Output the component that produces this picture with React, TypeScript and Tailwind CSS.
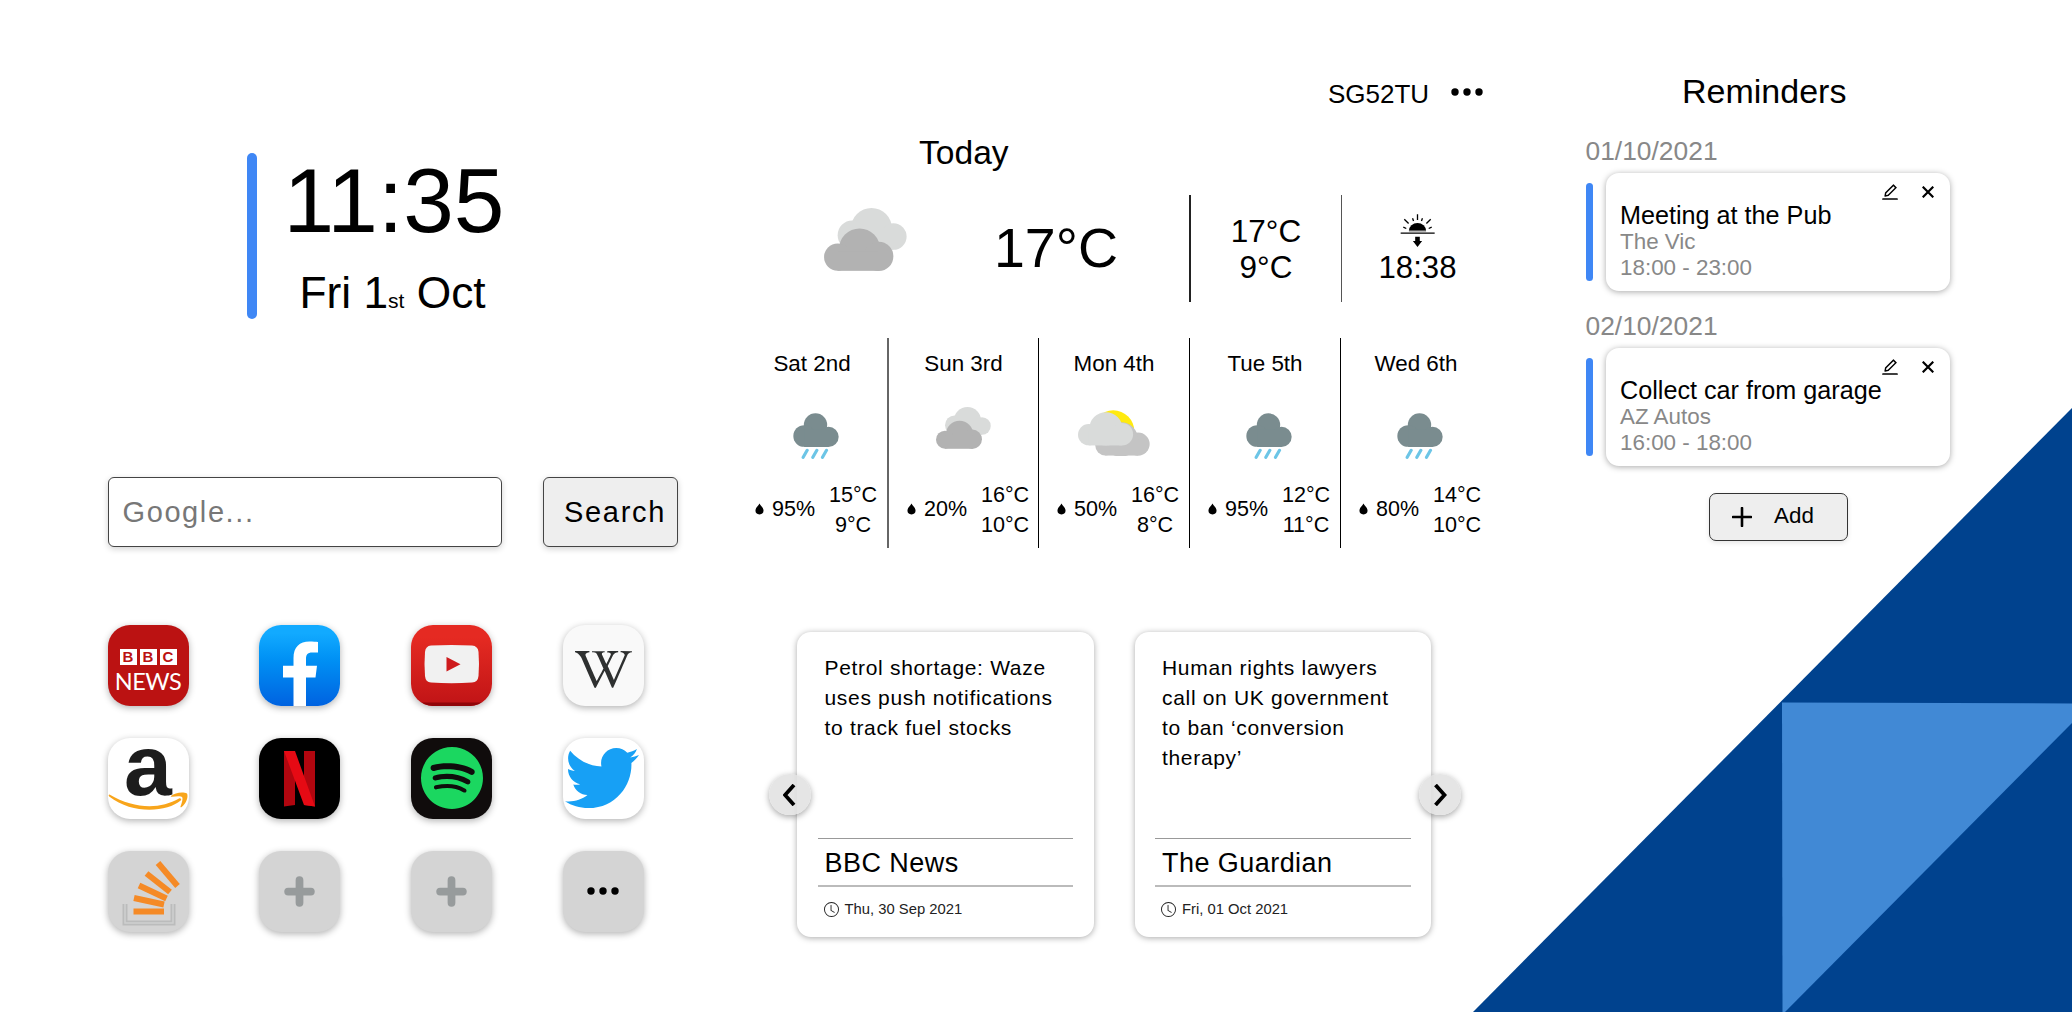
import type { ReactNode } from "react";
import { AiOutlineEdit } from "react-icons/ai";
import { BsClock } from "react-icons/bs";
import { FaSpotify, FaTwitter, FaWikipediaW } from "react-icons/fa";

type Weather = "rain" | "cloudy" | "partly";

const forecast: { day: string; icon: Weather; rain: string; high: string; low: string }[] = [
  { day: "Sat 2nd", icon: "rain", rain: "95%", high: "15°C", low: "9°C" },
  { day: "Sun 3rd", icon: "cloudy", rain: "20%", high: "16°C", low: "10°C" },
  { day: "Mon 4th", icon: "partly", rain: "50%", high: "16°C", low: "8°C" },
  { day: "Tue 5th", icon: "rain", rain: "95%", high: "12°C", low: "11°C" },
  { day: "Wed 6th", icon: "rain", rain: "80%", high: "14°C", low: "10°C" },
];

const news = [
  { title: "Petrol shortage: Waze uses push notifications to track fuel stocks", source: "BBC News", date: "Thu, 30 Sep 2021" },
  { title: "Human rights lawyers call on UK government to ban ‘conversion therapy’", source: "The Guardian", date: "Fri, 01 Oct 2021" },
];

const reminders = [
  { date: "01/10/2021", title: "Meeting at the Pub", place: "The Vic", time: "18:00 - 23:00" },
  { date: "02/10/2021", title: "Collect car from garage", place: "AZ Autos", time: "16:00 - 18:00" },
];

function CloudyIcon({ className }: { className: string }) {
  return (
    <svg viewBox="252 444 250 190" className={className}>
      <g fill="#d9dbda">
        <circle cx="395" cy="506" r="62" />
        <circle cx="337" cy="526" r="44" />
        <circle cx="461" cy="530" r="40" />
        <rect x="337" y="505" width="124" height="65" />
      </g>
      <g fill="#b2b2b2">
        <circle cx="359" cy="568" r="62" />
        <circle cx="293" cy="592" r="41" />
        <circle cx="417" cy="590" r="44" />
        <rect x="293" y="575" width="124" height="58.500" />
      </g>
    </svg>
  );
}

function RainIcon({ className }: { className: string }) {
  return (
    <svg viewBox="161 250 137 138" className={className}>
      <g fill="#7a8c8f">
        <circle cx="228" cy="286" r="35" />
        <circle cx="194" cy="319" r="32.500" />
        <circle cx="267" cy="321.500" r="30.500" />
        <rect x="194" y="300" width="73" height="52" />
      </g>
      <g stroke="#6cc5e6" strokeWidth="9.500" strokeLinecap="round">
        <path d="M203 362L191 383M232 362L220 383M261 362L249 383" />
      </g>
    </svg>
  );
}

function PartlyIcon({ className }: { className: string }) {
  return (
    <svg viewBox="-96 242 217 137" className={className}>
      <circle cx="10" cy="306" r="64" fill="#ffea0f" />
      <g fill="#c4c4c4">
        <circle cx="85" cy="344" r="35" />
        <circle cx="-14" cy="348" r="30" />
        <circle cx="33" cy="330" r="52" />
        <rect x="-14" y="340" width="99" height="38.500" />
      </g>
      <g fill="#d9dbda">
        <circle cx="-64" cy="315.500" r="32" />
        <circle cx="-12" cy="298" r="50" />
        <circle cx="36" cy="314" r="34" />
        <rect x="-64" y="305" width="100" height="43" />
      </g>
    </svg>
  );
}

function WeatherIcon({ kind }: { kind: Weather }) {
  if (kind === "rain") return <RainIcon className="mt-[5px] ml-[7px] h-[46px] w-[46px]" />;
  if (kind === "cloudy") return <CloudyIcon className="-mt-[1px] h-[42px] w-[55px]" />;
  return <PartlyIcon className="mt-0.5 h-[46px] w-[72px]" />;
}

function SunsetIcon() {
  return (
    <svg viewBox="778 459 104 100" className="h-[33px] w-[35px]">
      <path d="M804 510a26 24 0 0 1 52 0z" fill="#000" />
      <path d="M804 511h52" stroke="#999" strokeWidth="3" />
      <path d="M779 517h103" stroke="#000" strokeWidth="4" />
      <g stroke="#000" strokeWidth="4">
        <path d="M830 460v17M815 472l3 8M845 472l-3 8M790 475l13 13M870 475l-13 13M787 499l9 4M873 499l-9 4" />
      </g>
      <path d="M823 528h14v13h7l-14 18l-14-18h7z" fill="#000" />
    </svg>
  );
}

function Dots({ className }: { className: string }) {
  return (
    <svg viewBox="0 0 32 8" className={className}>
      <circle cx="4" cy="4" r="3.700" />
      <circle cx="16" cy="4" r="3.700" />
      <circle cx="28" cy="4" r="3.700" />
    </svg>
  );
}

function Tile({ className, children }: { className: string; children: ReactNode }) {
  return (
    <div className={`relative flex h-[81px] w-[81px] items-center justify-center rounded-[22px] shadow-[0_2px_7px_rgba(0,0,0,0.3)] ${className}`}>
      {children}
    </div>
  );
}

function PlusTile() {
  return (
    <Tile className="bg-[#d4d4d4]">
      <svg viewBox="0 0 30 30" className="h-[31px] w-[31px]" stroke="#979b9c" strokeWidth="7.500" strokeLinecap="round">
        <path d="M15 4v22M4 15h22" />
      </svg>
    </Tile>
  );
}

function Shortcuts() {
  return (
    <div className="mt-[78px] grid grid-cols-[repeat(4,81px)] gap-x-[70.800px] gap-y-8">
      <Tile className="bg-[#bb1212]">
        <div className="mt-[9px] flex flex-col items-center text-white">
          <div className="mt-[3px] flex gap-[3px]">
            {["B", "B", "C"].map((l, i) => (
              <span key={i} className="h-4 w-[17px] bg-white text-center text-[15px] leading-4 font-bold text-[#bb1212]">
                {l}
              </span>
            ))}
          </div>
          <span className="mt-[3px] font-[Lato] text-[23.500px] leading-[26px] tracking-[-0.500px]">NEWS</span>
        </div>
      </Tile>
      <Tile className="overflow-hidden bg-linear-to-b from-[#12aaff] from-10% to-[#0062e0]">
        <svg viewBox="0 0 81 81" className="h-full w-full">
          <path d="M34.500 81V52.500H24V40.700h10.500V33c0-11 6-16.500 16-16.500c3.500 0 6.500.3 8.500.5v10.500h-5.500c-5.500 0-6.500 2.700-6.500 6.500v6.700h11L56.500 52.500H47V81z" fill="#fff" />
        </svg>
      </Tile>
      <Tile className="overflow-hidden bg-linear-to-b from-[#e52a22] from-15% to-[#c01316]">
        <svg viewBox="0 0 81 81" className="h-full w-full">
          <rect y="77.500" width="81" height="4" fill="#900509" />
          <path d="M20 20.500Q40.500 19.500 61 20.500Q67 21 67.500 27Q68.500 39 67.500 51Q67 57 61 57.500Q40.500 59 20 57.500Q14.500 57 14 51Q13 39 14 27Q14.500 21 20 20.500z" fill="#f1f1f1" />
          <path d="M35.500 32v14.500l14-7.300z" fill="#ce1a1c" />
        </svg>
      </Tile>
      <Tile className="bg-[#f9f9f9]">
        <FaWikipediaW className="mt-[8px] h-[51px] w-[57px] text-[#2e3030]" />
      </Tile>
      <Tile className="bg-white">
        <span className="mt-1 self-start text-[86px] leading-[46px] font-bold text-[#1d1d1d]">a</span>
        <svg viewBox="0 0 81 81" className="absolute inset-0 h-full w-full" fill="#f8a51b">
          <path d="M1.500 56.500C26 71 52 71.500 71 60.500c1.500-.7 3 .8 1.700 2C59 74 25 77 1.200 58.500c-.7-.7-.7-2 .3-2z" />
          <path d="M63 58c4-3.500 12-4.500 16-2.500c1.500 3-.5 10-5.300 13.500c-.8.600-1.500.2-1.200-.6c1.300-3.200 2.600-7.500 1.700-9.200c-1-1.500-6-1-10.200-.5c-1 .1-1.400-.3-1-.7z" />
        </svg>
      </Tile>
      <Tile className="bg-black">
        <svg viewBox="0 0 81 81" className="h-full w-full">
          <path d="M25 13h11v54q-6 .5-11 1.500zM45 13h11v55.500q-5-1-11-1.500z" fill="#b1060f" />
          <path d="M25 13h11l20 55.500q-6-1-11-1.500z" fill="#e60a14" />
        </svg>
      </Tile>
      <Tile className="bg-[#100c0c]">
        <FaSpotify className="h-16 w-16 text-[#1bd760]" />
      </Tile>
      <Tile className="bg-white">
        <FaTwitter className="-ml-0.5 h-[76px] w-[74px] text-[#17a0f5]" />
      </Tile>
      <Tile className="bg-[#d4d4d4]">
        <svg viewBox="0 0 81 81" className="h-full w-full" fill="none">
          <path d="M17 53v19h48V53" stroke="#bbbcbc" strokeWidth="5" />
          <path d="M17 53v19h48V53" stroke="#cfd0d0" strokeWidth="1.500" />
          <g stroke="#f58a26" strokeWidth="6">
            <path d="M25.500 60.500h30.500" />
            <path d="M26 47l30 6.500" />
            <path d="M31 34.500l27.500 13" />
            <path d="M38.500 22.500L62 41" />
            <path d="M50 12l19.500 23" />
          </g>
        </svg>
      </Tile>
      <PlusTile />
      <PlusTile />
      <Tile className="bg-[#d4d4d4]">
        <Dots className="h-2 w-8" />
      </Tile>
    </div>
  );
}

function LeftColumn() {
  return (
    <section className="w-[737px] shrink-0 pl-[107.500px]">
      <div className="mt-[153px] ml-[139px] flex h-[166px]">
        <div className="h-full w-2.5 rounded-full bg-[#3f87f5]" />
        <div className="-mt-0.5 ml-[27px]">
          <div className="h-[100px] text-[91px] leading-[100px]">11:35</div>
          <div className="mt-[17px] ml-[16px] text-[44.300px] leading-[50px] whitespace-nowrap">
            Fri 1<span className="text-[21px]">st</span> Oct
          </div>
        </div>
      </div>
      <div className="mt-[158px] flex h-[69.500px]">
        <div className="flex w-[394px] items-center rounded-md border border-[#444] bg-white pt-0.5 pl-3.5 text-[29px] tracking-[1.600px] text-[#777] shadow-[0_2px_6px_rgba(0,0,0,0.18)]">
          Google...
        </div>
        <div className="ml-[41px] flex w-[135px] items-center rounded-md border border-[#444] bg-[#eee] pt-0.5 pl-[20.500px] text-[29px] tracking-[1.700px] shadow-[0_2px_6px_rgba(0,0,0,0.18)]">
          Search
        </div>
      </div>
      <Shortcuts />
    </section>
  );
}

function Forecast() {
  return (
    <div className="mt-9 grid h-[210px] grid-cols-[152px_150px_151px_151px_150px]">
      {forecast.map((d, i) => (
        <div key={d.day} className={`flex flex-col items-center ${i === 0 ? "border-r-2 border-[#666]" : i < 4 ? "border-r border-black" : ""}`}>
          <div className="mt-3 text-[22.400px] leading-7">{d.day}</div>
          <div className="mt-[30px] flex h-[54px] items-start justify-center">
            <WeatherIcon kind={d.icon} />
          </div>
          <div className="mt-5 flex w-full pl-[18px]">
            <svg viewBox="0 0 10 12" className="mt-[21px] h-3 w-[9px]">
              <path d="M5 0C6 2.500 9.500 4.500 9.500 7.800A4.500 4.200 0 0 1 .5 7.800C.5 4.500 4 2.500 5 0z" />
            </svg>
            <span className="mt-[13px] ml-2 w-[46px] text-[21.500px] leading-7">{d.rain}</span>
            <div className="-mt-0.5 ml-[9px] w-[52px] text-center text-[21.600px] leading-[29.500px]">
              <div>{d.high}</div>
              <div>{d.low}</div>
            </div>
          </div>
        </div>
      ))}
    </div>
  );
}

function Arrow({ className, d }: { className: string; d: string }) {
  return (
    <button className={`absolute top-[142px] flex h-[41px] w-[42px] items-center justify-center rounded-full bg-[#e0e0e0]/85 shadow-[0_2px_6px_rgba(0,0,0,0.35)] ${className}`}>
      <svg viewBox="0 0 14 22" className="h-[22px] w-3.5" fill="none" stroke="#000" strokeWidth="3.800">
        <path d={d} />
      </svg>
    </button>
  );
}

function News() {
  return (
    <div className="relative mt-[84px] flex gap-[41px] pl-[60px]">
      {news.map((n) => (
        <article key={n.source} className="flex h-[305px] w-[296.500px] flex-col rounded-[14px] bg-white px-[20.500px] shadow-[0_1px_6px_rgba(0,0,0,0.34)]">
          <p className="mt-[21px] h-[185px] w-[242px] pl-[7px] text-[21px] leading-[29.900px] tracking-[0.680px]">{n.title}</p>
          <div className="flex h-[49px] items-center border-t border-b-2 border-t-[#999] border-b-[#bbb] pt-0.5 pl-[7px] text-[27px] tracking-[0.450px]">
            {n.source}
          </div>
          <div className="mt-[11px] flex items-center gap-[6px] pl-1.5 text-[14.800px] leading-[22px] text-[#222]">
            <BsClock className="h-[15px] w-[15px]" />
            {n.date}
          </div>
        </article>
      ))}
      <Arrow className="left-[31.500px]" d="M11 1L2 11l9 10" />
      <Arrow className="left-[681.500px]" d="M2.500 1l9 10l-9 10" />
    </div>
  );
}

function MiddleColumn() {
  return (
    <section className="w-[754px] shrink-0">
      <div className="mt-[79px] flex h-[30px] items-center pl-[591px] text-[26px] leading-[30px]">
        SG52TU
        <Dots className="-mt-1 ml-[22px] h-2 w-8" />
      </div>
      <div className="mt-6 pl-[182px] text-[33.600px] leading-10">Today</div>
      <div className="mt-[22px] grid h-[107px] grid-cols-[454px_151px_149px]">
        <div className="flex border-r-2 border-[#222] pl-[87px]">
          <CloudyIcon className="mt-[13px] h-[63px] w-[83px]" />
          <span className="mt-[23px] ml-[87px] text-[55.500px] leading-[60px]">17°C</span>
        </div>
        <div className="mt-[18px] flex flex-col items-center border-r border-transparent text-[31.500px] leading-9">
          <div>17°C</div>
          <div>9°C</div>
        </div>
        <div className="-ml-px flex flex-col items-center border-l border-[#555] pt-[19px] pl-0.5 text-[31.200px]">
          <SunsetIcon />
          <span className="mt-[3px] leading-9">18:38</span>
        </div>
      </div>
      <Forecast />
      <News />
    </section>
  );
}

function RightColumn() {
  return (
    <section className="flex w-[581px] shrink-0 flex-col pl-[94.500px]">
      <h2 className="mt-[71px] w-[364px] pl-[96.500px] text-[34px] leading-[40px]">Reminders</h2>
      {reminders.map((r) => (
        <div key={r.date} className="mt-[20.500px] first-of-type:mt-[25px]">
          <div className="h-[30px] text-[26.400px] leading-[30px] text-[#888]">{r.date}</div>
          <div className="mt-[7px] flex h-[117.500px]">
            <div className="mt-2.5 h-[98px] w-[7px] rounded-full bg-[#3f87f5]" />
            <div className="relative ml-[13.500px] w-[344px] rounded-[13px] bg-white pt-[28px] pl-3.5 shadow-[0_1px_6px_rgba(0,0,0,0.34)]">
              <div className="absolute top-[9px] right-[16.500px] flex items-center gap-[22px]">
                <AiOutlineEdit className="h-5 w-5" />
                <svg viewBox="0 0 12 12" className="h-3 w-3" stroke="#000" strokeWidth="2.200">
                  <path d="M.7.7l10.600 10.600M11.300.7L.7 11.300" />
                </svg>
              </div>
              <div className="text-[25.200px] leading-[28px]">{r.title}</div>
              <div className="text-[22.400px] leading-[26px] text-[#888]">{r.place}</div>
              <div className="text-[22.400px] leading-[26px] text-[#888]">{r.time}</div>
            </div>
          </div>
        </div>
      ))}
      <button className="mt-[27px] ml-[123.500px] flex h-[48px] w-[138.500px] items-center rounded-[7px] border border-[#333] bg-[#eee] pl-[22px] text-[22.400px] shadow-[0_2px_5px_rgba(0,0,0,0.1)]">
        <svg viewBox="0 0 20 20" className="h-5 w-5" stroke="#000" strokeWidth="2.600" strokeLinecap="round">
          <path d="M10 1v18M1 10h18" />
        </svg>
        <span className="-mt-0.5 ml-[22px]">Add</span>
      </button>
    </section>
  );
}

export default function App() {
  return (
    <main className="relative h-[1012px] w-[2072px] overflow-hidden bg-white font-['Liberation_Sans',Arial,sans-serif] text-black">
      <svg viewBox="0 0 599 604" className="absolute right-0 bottom-0 h-[604px] w-[599px]">
        <path d="M0 604L599 0V604z" fill="#00428e" />
        <path d="M309 294.500L599 295.500V315L312 604H309.500z" fill="#4189d5" />
      </svg>
      <div className="relative flex h-full">
        <LeftColumn />
        <MiddleColumn />
        <RightColumn />
      </div>
    </main>
  );
}
